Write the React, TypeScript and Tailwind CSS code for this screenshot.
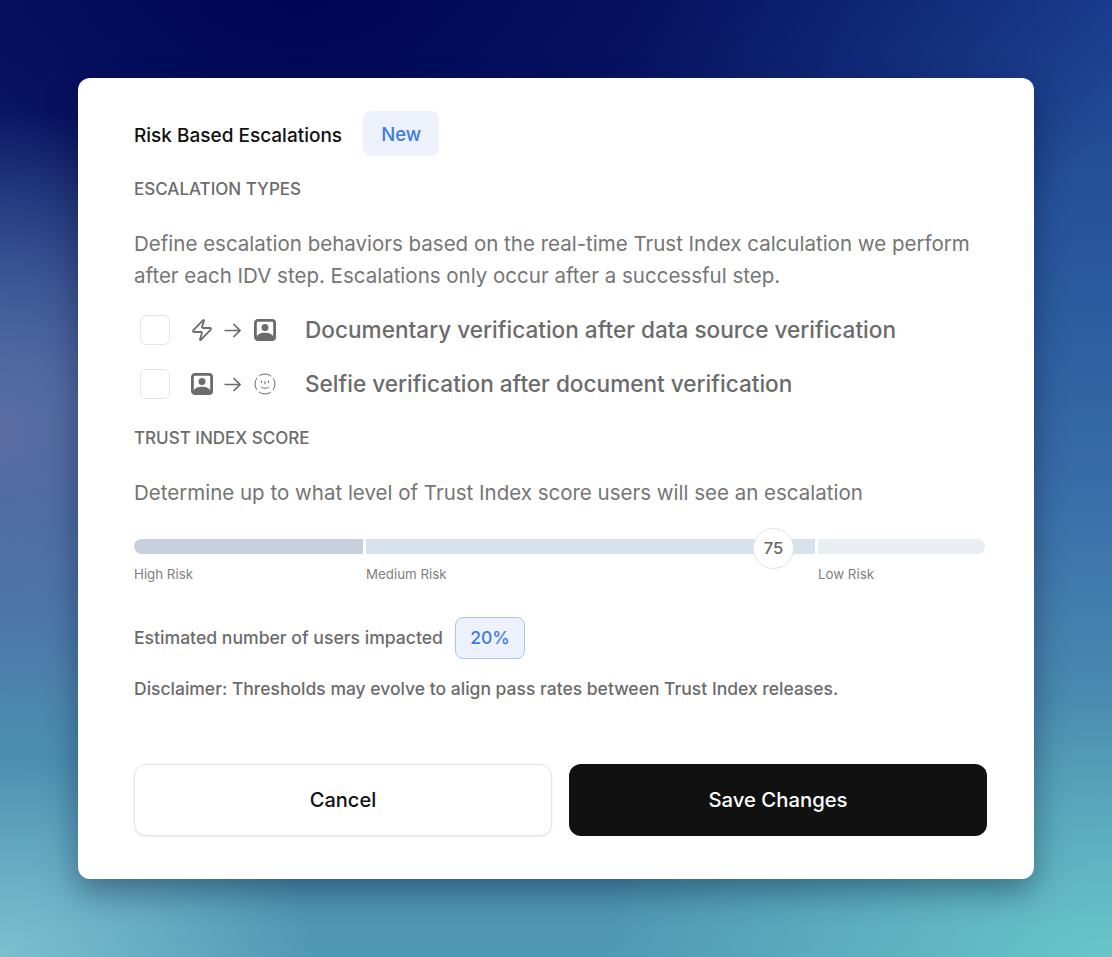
import { Zap } from "lucide-react";

function DocIcon() {
  return (
    <svg width="22" height="22" viewBox="0 0 22 22" className="shrink-0">
      <rect x="1.4" y="1.4" width="19.2" height="19.2" rx="2.6" fill="none" stroke="#6b6b6b" strokeWidth="2.8" />
      <circle cx="11" cy="8.6" r="3.5" fill="#6b6b6b" />
      <path d="M2.5 20 V18 C3.5 15.2 7 13.8 11 13.8 C15 13.8 18.5 15.2 19.5 18 V20 Z" fill="#6b6b6b" />
    </svg>
  );
}

function FaceIcon() {
  return (
    <svg width="22" height="22" viewBox="0 0 22 22" fill="none" stroke="#6b6b6b" strokeWidth="1" className="shrink-0">
      <circle cx="11" cy="11" r="10" strokeDasharray="12.7 3" strokeDashoffset="6.3" />
      <path d="M7.5 8 V9.5 M14.5 8 V9.5 M11 8.5 V11" strokeLinecap="round" />
      <path d="M7 13.8 C8.5 15.8 13.5 15.8 15 13.8" strokeLinecap="round" />
    </svg>
  );
}

function Arrow() {
  return (
    <svg width="17" height="15" viewBox="0 0 17 15" fill="none" stroke="#6b6b6b" strokeWidth="1.7" className="ml-[10px] mr-[12px] shrink-0">
      <path d="M0.5 7.5 H16 M9.5 1 L16 7.5 L9.5 14" />
    </svg>
  );
}

function Slot({ children }: { children: React.ReactNode }) {
  return <div className="w-[24px] flex justify-center shrink-0">{children}</div>;
}

function Row({ icons, label }: { icons: React.ReactNode; label: string }) {
  return (
    <div className="flex items-center h-[30px] pl-[6px]">
      <div className="w-[30px] h-[30px] rounded-md border border-[#e5e5e5] bg-white shrink-0" />
      <div className="w-[135px] pl-[20px] flex items-center shrink-0">{icons}</div>
      <span className="text-[22.6px] font-medium text-[#6b6b6b] leading-[30px] whitespace-nowrap">{label}</span>
    </div>
  );
}

export default function App() {
  return (
    <div
      className="w-full h-[957px] flex items-start justify-center pt-[78px] overflow-hidden bg-[radial-gradient(ellipse_320px_200px_at_0px_957px,#7cc0cf_0%,rgba(124,192,207,0)_100%),radial-gradient(ellipse_520px_260px_at_1112px_957px,#68c6c9_0%,rgba(104,198,201,0)_100%),radial-gradient(ellipse_400px_320px_at_0px_430px,#596ca1_0%,rgba(89,108,161,0)_100%),radial-gradient(ellipse_850px_420px_at_300px_0px,#000555_0%,rgba(0,5,85,0.8)_40%,rgba(0,5,85,0)_100%),linear-gradient(180deg,#1a3f8f_0%,#2a5a9f_30%,#3a6ea9_52%,#4a8ab0_73%,#4f98b5_100%)]"
      style={{ fontFamily: "Inter, 'Liberation Sans', sans-serif" }}
    >
      <div className="w-[956px] h-[801px] bg-white rounded-xl shadow-[0_12px_32px_rgba(0,15,40,0.4)] pl-[56px] pr-[47px] pt-[33px] flex flex-col shrink-0">
        {/* Header */}
        <div className="flex items-center gap-[21px] h-[45px]">
          <h2 className="text-[19px] leading-[24px] pt-[5px] font-medium text-[#111111] whitespace-nowrap">Risk Based Escalations</h2>
          <span className="w-[76px] h-[45px] pt-[2px] flex items-center justify-center rounded-lg bg-[#edf1fb] text-[#3b7de0] text-[18.5px] font-medium">
            New
          </span>
        </div>

        <h3 className="mt-[22px] text-[17px] leading-[22px] font-medium text-[#6b6b6b]">ESCALATION TYPES</h3>
        <p className="mt-[28px] text-[20.5px] leading-[32px] text-[#757575] whitespace-nowrap">
          Define escalation behaviors based on the real-time Trust Index calculation we perform
          <br />
          after each IDV step. Escalations only occur after a successful step.
        </p>

        <div className="mt-[23px] flex flex-col gap-[24px]">
          <Row
            label="Documentary verification after data source verification"
            icons={
              <>
                <Slot><Zap size={24} color="#6b6b6b" strokeWidth={1.8} /></Slot>
                <Arrow />
                <Slot><DocIcon /></Slot>
              </>
            }
          />
          <Row
            label="Selfie verification after document verification"
            icons={
              <>
                <Slot><DocIcon /></Slot>
                <Arrow />
                <Slot><FaceIcon /></Slot>
              </>
            }
          />
        </div>

        <h3 className="mt-[28px] text-[17px] leading-[22px] font-medium text-[#6b6b6b]">TRUST INDEX SCORE</h3>
        <p className="mt-[28px] text-[20.5px] leading-[32px] text-[#757575] whitespace-nowrap">
          Determine up to what level of Trust Index score users will see an escalation
        </p>

        {/* Slider */}
        <div className="relative mt-[30px] w-[851px] flex gap-[3px] h-[15px]">
          <div className="w-[229px] bg-[#c7d1dd] rounded-l-lg" />
          <div className="w-[449px] bg-[#d8e2ed]" />
          <div className="flex-1 bg-[#e9eef4] rounded-r-lg" />
          <div className="absolute left-[619px] top-[-11px] w-[41px] h-[41px] rounded-full bg-white border border-[#e3e3e3] flex items-center justify-center text-[16.5px] font-medium text-[#666666]">
            75
          </div>
        </div>
        <div className="mt-[12px] w-[851px] flex gap-[3px] text-[13.3px] leading-[16px] text-[#808080]">
          <span className="w-[229px]">High Risk</span>
          <span className="w-[449px]">Medium Risk</span>
          <span>Low Risk</span>
        </div>

        <div className="mt-[35px] flex items-center gap-[12px]">
          <span className="text-[17.6px] font-[450] text-[#6b6b6b] whitespace-nowrap">Estimated number of users impacted</span>
          <span className="w-[70px] h-[42px] flex items-center justify-center rounded-lg border border-[#a9c6f2] bg-[#edf1fb] text-[#3b7de0] text-[17.6px] font-[450]">
            20%
          </span>
        </div>
        <p className="mt-[19px] text-[17.5px] leading-[22px] font-[450] text-[#6b6b6b] whitespace-nowrap">
          Disclaimer: Thresholds may evolve to align pass rates between Trust Index releases.
        </p>

        {/* Actions */}
        <div className="mt-[64px] flex gap-[17px]">
          <button className="w-[418px] h-[72px] rounded-xl bg-white border border-[#e5e5e5] shadow-[0_1px_2px_rgba(0,0,0,0.08)] text-[20px] font-medium text-[#111111]">
            Cancel
          </button>
          <button className="w-[418px] h-[72px] rounded-xl bg-[#111111] text-[20.3px] font-medium text-white">
            Save Changes
          </button>
        </div>
      </div>
    </div>
  );
}
